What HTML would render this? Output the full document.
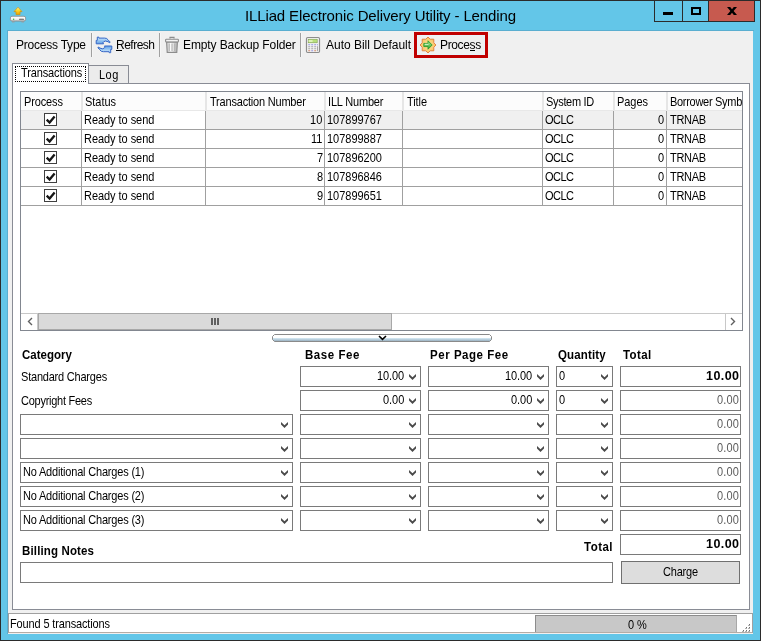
<!DOCTYPE html>
<html><head><meta charset="utf-8"><style>
html,body{margin:0;padding:0;width:761px;height:641px;overflow:hidden;background:#63c6e8}
body>div,body>svg{position:absolute}
.t{white-space:nowrap;font-family:"Liberation Sans",sans-serif;will-change:transform}
</style></head><body>
<div style="left:0;top:0;width:761px;height:641px;background:#63c6e8;box-shadow:inset 0 0 0 1px #2b2b2b"></div>
<div class="t" style="left:245.00px;top:8.00px;font-size:15px;line-height:15px;font-weight:normal;color:#000;letter-spacing:-0.135px;">ILLiad Electronic Delivery Utility - Lending</div>
<div style="left:654px;top:0px;width:101px;height:22px;background:#63c6e8;border:1px solid #2b2b2b;box-sizing:border-box"></div>
<div style="left:682px;top:0px;width:1px;height:22px;background:#2b2b2b"></div>
<div style="left:708px;top:0px;width:47px;height:22px;background:#c75a4f;border:1px solid #2b2b2b;border-top-color:#2b2b2b;box-sizing:border-box"></div>
<div style="left:663px;top:12px;width:10px;height:3px;background:#000"></div>
<div style="left:691px;top:7px;width:10px;height:8px;border:2px solid #000;box-sizing:border-box"></div>
<svg style="left:727px;top:7px" width="10" height="8" viewBox="0 0 10 8"><path d="M0 0h3.2l1.8 2.2l1.8-2.2h3.2l-3.4 4l3.4 4h-3.2l-1.8-2.2l-1.8 2.2h-3.2l3.4-4z" fill="#000"/></svg>
<svg style="left:9px;top:5px" width="18" height="19" viewBox="0 0 18 19">
<defs><linearGradient id="ga" x1="0" y1="0" x2="0" y2="1"><stop offset="0" stop-color="#fffbd0"/><stop offset="0.35" stop-color="#ffe030"/><stop offset="1" stop-color="#e8a000"/></linearGradient>
<linearGradient id="gd" x1="0" y1="0" x2="0" y2="1"><stop offset="0" stop-color="#ffffff"/><stop offset="0.6" stop-color="#f2f2f2"/><stop offset="1" stop-color="#bcbcbc"/></linearGradient></defs>
<path d="M9 2.2 L13 6.6 L11 6.6 L11 9.6 L7 9.6 L7 6.6 L5 6.6 Z" fill="url(#ga)" stroke="#d89000" stroke-width="0.7" stroke-linejoin="round"/>
<rect x="1.4" y="11.3" width="15.2" height="4.8" rx="1.6" fill="url(#gd)" stroke="#8a8a8a" stroke-width="0.8"/>
<rect x="3" y="16.3" width="2.6" height="1.1" fill="#9a9a9a"/><rect x="12.4" y="16.3" width="2.6" height="1.1" fill="#9a9a9a"/>
<circle cx="4.6" cy="14.3" r="0.75" fill="#2ec02e"/><rect x="10" y="13.8" width="5" height="1" rx="0.5" fill="#5a5a5a"/>
</svg>
<div style="left:8px;top:31px;width:745px;height:603px;background:#f0f0f0"></div>
<div style="left:7px;top:30px;width:747px;height:1px;background:#5aaed0"></div>
<div style="left:7px;top:30px;width:1px;height:604px;background:#5aaed0"></div>
<div class="t" style="left:15.50px;top:39.00px;font-size:12px;line-height:12px;font-weight:normal;color:#000;letter-spacing:-0.224px;">Process Type</div>
<div style="left:91px;top:33px;width:1px;height:24px;background:#a0a0a0"></div>
<div style="left:92px;top:33px;width:1px;height:24px;background:#f6f6f6"></div>
<div style="left:159px;top:33px;width:1px;height:24px;background:#a0a0a0"></div>
<div style="left:160px;top:33px;width:1px;height:24px;background:#f6f6f6"></div>
<div style="left:300px;top:33px;width:1px;height:24px;background:#a0a0a0"></div>
<div style="left:301px;top:33px;width:1px;height:24px;background:#f6f6f6"></div>
<svg style="left:95px;top:36px" width="18" height="18" viewBox="0 0 18 18">
<defs><linearGradient id="gr" x1="0" y1="0" x2="0" y2="1"><stop offset="0" stop-color="#d8f0ff"/><stop offset="1" stop-color="#5d9fe6"/></linearGradient></defs>
<g id="arr"><path d="M1.2 7.8 L1.2 4.4 L2.3 4.4 L2.3 1.1 L3.8 1.1 L3.8 2.1 L9.7 2.1 L11.7 2.5 L13.4 4.2 L15 5.9 L14.8 6.8 L13 5.7 L10.3 5 L8.6 5.9 L7.8 6.8 L8.6 7.8 Z" fill="url(#gr)" stroke="#3566c6" stroke-width="1"/></g>
<use href="#arr" transform="rotate(180 9 8.9)"/>
</svg>
<div class="t" style="left:116.00px;top:39.00px;font-size:12px;line-height:12px;font-weight:normal;color:#000;letter-spacing:-0.503px;">Refresh</div>
<div style="left:116px;top:50px;width:6px;height:1px;background:#000"></div>
<svg style="left:164px;top:36px" width="16" height="18" viewBox="0 0 16 18">
<defs><linearGradient id="gt" x1="0" y1="0" x2="1" y2="0"><stop offset="0" stop-color="#c8c8c8"/><stop offset="0.4" stop-color="#ffffff"/><stop offset="1" stop-color="#b0b0b0"/></linearGradient></defs>
<path d="M6 2.5 L6 1.3 L10 1.3 L10 2.5" fill="none" stroke="#8c8c8c" stroke-width="1.2"/>
<rect x="1.6" y="3.3" width="12.8" height="2.8" rx="0.8" fill="#f4f4f4" stroke="#8c8c8c" stroke-width="1.1"/>
<path d="M2.6 6.2 L13.4 6.2 L12.8 16.4 L3.2 16.4 Z" fill="url(#gt)" stroke="#8c8c8c" stroke-width="1.1"/>
<path d="M5.2 7.5V15M8 7.5V15M10.8 7.5V15" stroke="#a8a8a8" stroke-width="1"/>
</svg>
<div class="t" style="left:183.00px;top:39.00px;font-size:12px;line-height:12px;font-weight:normal;color:#000;letter-spacing:-0.105px;">Empty Backup Folder</div>
<svg style="left:305px;top:36px" width="16" height="18" viewBox="0 0 16 18">
<rect x="1.5" y="1.5" width="13" height="15" rx="1.2" fill="#f6f6f6" stroke="#8c8c8c" stroke-width="1.2"/>
<rect x="3.2" y="3.2" width="9" height="3.6" fill="#b8e07a" stroke="#7a9a50" stroke-width="0.6"/>
<rect x="3.6" y="4.4" width="4" height="1.2" fill="#f8ffe0"/>
<g fill="#9a9ae0"><rect x="3.2" y="8.2" width="2" height="1.1"/><rect x="6.2" y="8.2" width="2" height="1.1"/><rect x="9.2" y="8.2" width="2" height="1.1"/><rect x="12" y="8.2" width="1" height="1.1"/></g>
<g fill="#a8a8a8"><rect x="3.2" y="10.2" width="2" height="1.1"/><rect x="6.2" y="10.2" width="2" height="1.1"/><rect x="9.2" y="10.2" width="2" height="1.1"/><rect x="3.2" y="12.2" width="2" height="1.1"/><rect x="6.2" y="12.2" width="2" height="1.1"/><rect x="9.2" y="12.2" width="2" height="1.1"/><rect x="12" y="10.2" width="1" height="5"/></g>
<rect x="3.2" y="14.2" width="2" height="1.1" fill="#d09070"/><rect x="6.2" y="14.2" width="2" height="1.1" fill="#9a9ae0"/><rect x="9.2" y="14.2" width="2" height="1.1" fill="#d09070"/>
</svg>
<div class="t" style="left:325.60px;top:39.00px;font-size:12px;line-height:12px;font-weight:normal;color:#000;letter-spacing:-0.022px;">Auto Bill Default</div>
<div style="left:414px;top:32px;width:74px;height:26px;border:3px solid #c00000;box-sizing:border-box"></div>
<div style="left:417px;top:35px;width:68px;height:20px;border:1px solid #e6f4fb;box-sizing:border-box;background:#f0f0f0"></div>
<svg style="left:419px;top:36px" width="18" height="18" viewBox="0 0 18 18">
<defs><radialGradient id="gs" cx="0.5" cy="0.5" r="0.6"><stop offset="0" stop-color="#ffe8a0"/><stop offset="1" stop-color="#f7b850"/></radialGradient>
<linearGradient id="gg" x1="0" y1="0" x2="0" y2="1"><stop offset="0" stop-color="#b0f0a0"/><stop offset="1" stop-color="#2aa02a"/></linearGradient></defs>
<path d="M9 1 L11.2 3.2 L14.8 3.2 L14.8 6.8 L17 9 L14.8 11.2 L14.8 14.8 L11.2 14.8 L9 17 L6.8 14.8 L3.2 14.8 L3.2 11.2 L1 9 L3.2 6.8 L3.2 3.2 L6.8 3.2 Z" fill="url(#gs)" stroke="#e07b3a" stroke-width="0.9"/>
<path d="M4.8 7.4 L9 7.4 L9 4.8 L13.2 9 L9 13.2 L9 10.6 L4.8 10.6 Z" fill="url(#gg)" stroke="#2a9a2a" stroke-width="0.9" stroke-linejoin="round"/>
<path d="M5.8 8.3 L9.5 8.3" stroke="#e8ffe0" stroke-width="0.9"/>
</svg>
<div class="t" style="left:439.50px;top:39.00px;font-size:12px;line-height:12px;font-weight:normal;color:#000;letter-spacing:-0.357px;">Process</div>
<div style="left:470px;top:50px;width:5px;height:1px;background:#000"></div>
<div style="left:12px;top:83px;width:738px;height:527px;background:#fff;border:1px solid #898c95;box-sizing:border-box"></div>
<div style="left:88px;top:65px;width:41px;height:18px;background:#ececec;border:1px solid #898c95;border-bottom:none;box-sizing:border-box"></div>
<div class="t" style="left:98.70px;top:69.00px;font-size:11px;line-height:11px;font-weight:normal;color:#000;letter-spacing:0.463px;transform:scaleY(1.12);transform-origin:0 0;">Log</div>
<div style="left:12px;top:63px;width:77px;height:21px;background:#fff;border:1px solid #898c95;border-bottom:none;box-sizing:border-box"></div>
<div style="left:15px;top:66px;width:71px;height:16px;border:1px dotted #000;box-sizing:border-box"></div>
<div class="t" style="left:20.50px;top:67.00px;font-size:11px;line-height:11px;font-weight:normal;color:#000;letter-spacing:-0.118px;transform:scaleY(1.12);transform-origin:0 0;">Transactions</div>
<div style="left:20px;top:91px;width:723px;height:240px;background:#fff;border:1px solid #828790;box-sizing:border-box"></div>
<div style="left:21px;top:92px;width:721px;height:18px;background:#fcfcfc"></div>
<div style="left:21px;top:110px;width:721px;height:1px;background:#e8e8e8"></div>
<div style="left:81px;top:92px;width:2px;height:18px;background:#e6e6e6"></div>
<div style="left:205px;top:92px;width:2px;height:18px;background:#e6e6e6"></div>
<div style="left:324px;top:92px;width:2px;height:18px;background:#e6e6e6"></div>
<div style="left:402px;top:92px;width:2px;height:18px;background:#e6e6e6"></div>
<div style="left:542px;top:92px;width:2px;height:18px;background:#e6e6e6"></div>
<div style="left:613px;top:92px;width:2px;height:18px;background:#e6e6e6"></div>
<div style="left:666px;top:92px;width:2px;height:18px;background:#e6e6e6"></div>
<div class="t" style="left:23.50px;top:96.00px;font-size:11px;line-height:11px;font-weight:normal;color:#000;letter-spacing:-0.125px;transform:scaleY(1.12);transform-origin:0 0;">Process</div>
<div class="t" style="left:84.70px;top:96.00px;font-size:11px;line-height:11px;font-weight:normal;color:#000;letter-spacing:-0.044px;transform:scaleY(1.12);transform-origin:0 0;">Status</div>
<div class="t" style="left:210.10px;top:96.00px;font-size:11px;line-height:11px;font-weight:normal;color:#000;letter-spacing:-0.199px;transform:scaleY(1.12);transform-origin:0 0;">Transaction Number</div>
<div class="t" style="left:327.60px;top:96.00px;font-size:11px;line-height:11px;font-weight:normal;color:#000;letter-spacing:-0.177px;transform:scaleY(1.12);transform-origin:0 0;">ILL Number</div>
<div class="t" style="left:406.60px;top:96.00px;font-size:11px;line-height:11px;font-weight:normal;color:#000;letter-spacing:-0.094px;transform:scaleY(1.12);transform-origin:0 0;">Title</div>
<div class="t" style="left:545.70px;top:96.00px;font-size:11px;line-height:11px;font-weight:normal;color:#000;letter-spacing:-0.319px;transform:scaleY(1.12);transform-origin:0 0;">System ID</div>
<div class="t" style="left:617.20px;top:96.00px;font-size:11px;line-height:11px;font-weight:normal;color:#000;letter-spacing:-0.055px;transform:scaleY(1.12);transform-origin:0 0;">Pages</div>
<div class="t" style="left:669.70px;top:96.00px;font-size:11px;line-height:11px;font-weight:normal;color:#000;letter-spacing:-0.293px;transform:scaleY(1.12);transform-origin:0 0;">Borrower Symb</div>
<div style="left:21px;top:111px;width:721px;height:18px;background:#f0f0f0"></div>
<div style="left:82px;top:111px;width:124px;height:18px;background:#fff"></div>
<div style="left:21px;top:129px;width:721px;height:1px;background:#a0a0a0"></div>
<div style="left:81px;top:111px;width:1px;height:19px;background:#a0a0a0"></div>
<div style="left:205px;top:111px;width:1px;height:19px;background:#a0a0a0"></div>
<div style="left:324px;top:111px;width:1px;height:19px;background:#a0a0a0"></div>
<div style="left:402px;top:111px;width:1px;height:19px;background:#a0a0a0"></div>
<div style="left:542px;top:111px;width:1px;height:19px;background:#a0a0a0"></div>
<div style="left:613px;top:111px;width:1px;height:19px;background:#a0a0a0"></div>
<div style="left:666px;top:111px;width:1px;height:19px;background:#a0a0a0"></div>
<div style="left:44px;top:113px;width:13px;height:13px;background:#fff;border:1px solid #404040;box-sizing:border-box"></div>
<svg style="left:44px;top:113px" width="13" height="13" viewBox="0 0 13 13"><path d="M2.7 6.6 L5.6 9.5 L10.6 3.4" fill="none" stroke="#151515" stroke-width="2.3"/></svg>
<div class="t" style="left:83.70px;top:114.00px;font-size:11px;line-height:11px;font-weight:normal;color:#000;letter-spacing:-0.050px;transform:scaleY(1.12);transform-origin:0 0;">Ready to send</div>
<div class="t" style="left:310.45px;top:114.00px;font-size:11px;line-height:11px;font-weight:normal;color:#000;letter-spacing:0.050px;transform:scaleY(1.12);transform-origin:0 0;">10</div>
<div class="t" style="left:326.90px;top:114.00px;font-size:11px;line-height:11px;font-weight:normal;color:#000;letter-spacing:-0.016px;transform:scaleY(1.12);transform-origin:0 0;">107899767</div>
<div class="t" style="left:544.80px;top:114.00px;font-size:11px;line-height:11px;font-weight:normal;color:#000;letter-spacing:-0.521px;transform:scaleY(1.12);transform-origin:0 0;">OCLC</div>
<div class="t" style="left:657.80px;top:114.00px;font-size:11px;line-height:11px;font-weight:normal;color:#000;letter-spacing:1.075px;transform:scaleY(1.12);transform-origin:0 0;">0</div>
<div class="t" style="left:670.00px;top:114.00px;font-size:11px;line-height:11px;font-weight:normal;color:#000;letter-spacing:-0.320px;transform:scaleY(1.12);transform-origin:0 0;">TRNAB</div>
<div style="left:21px;top:130px;width:721px;height:18px;background:#fff"></div>
<div style="left:21px;top:148px;width:721px;height:1px;background:#a0a0a0"></div>
<div style="left:81px;top:130px;width:1px;height:19px;background:#a0a0a0"></div>
<div style="left:205px;top:130px;width:1px;height:19px;background:#a0a0a0"></div>
<div style="left:324px;top:130px;width:1px;height:19px;background:#a0a0a0"></div>
<div style="left:402px;top:130px;width:1px;height:19px;background:#a0a0a0"></div>
<div style="left:542px;top:130px;width:1px;height:19px;background:#a0a0a0"></div>
<div style="left:613px;top:130px;width:1px;height:19px;background:#a0a0a0"></div>
<div style="left:666px;top:130px;width:1px;height:19px;background:#a0a0a0"></div>
<div style="left:44px;top:132px;width:13px;height:13px;background:#fff;border:1px solid #404040;box-sizing:border-box"></div>
<svg style="left:44px;top:132px" width="13" height="13" viewBox="0 0 13 13"><path d="M2.7 6.6 L5.6 9.5 L10.6 3.4" fill="none" stroke="#151515" stroke-width="2.3"/></svg>
<div class="t" style="left:83.70px;top:133.00px;font-size:11px;line-height:11px;font-weight:normal;color:#000;letter-spacing:-0.050px;transform:scaleY(1.12);transform-origin:0 0;">Ready to send</div>
<div class="t" style="left:311.26px;top:133.00px;font-size:11px;line-height:11px;font-weight:normal;color:#000;letter-spacing:0.050px;transform:scaleY(1.12);transform-origin:0 0;">11</div>
<div class="t" style="left:326.90px;top:133.00px;font-size:11px;line-height:11px;font-weight:normal;color:#000;letter-spacing:-0.016px;transform:scaleY(1.12);transform-origin:0 0;">107899887</div>
<div class="t" style="left:544.80px;top:133.00px;font-size:11px;line-height:11px;font-weight:normal;color:#000;letter-spacing:-0.521px;transform:scaleY(1.12);transform-origin:0 0;">OCLC</div>
<div class="t" style="left:657.80px;top:133.00px;font-size:11px;line-height:11px;font-weight:normal;color:#000;letter-spacing:1.075px;transform:scaleY(1.12);transform-origin:0 0;">0</div>
<div class="t" style="left:670.00px;top:133.00px;font-size:11px;line-height:11px;font-weight:normal;color:#000;letter-spacing:-0.320px;transform:scaleY(1.12);transform-origin:0 0;">TRNAB</div>
<div style="left:21px;top:149px;width:721px;height:18px;background:#fff"></div>
<div style="left:21px;top:167px;width:721px;height:1px;background:#a0a0a0"></div>
<div style="left:81px;top:149px;width:1px;height:19px;background:#a0a0a0"></div>
<div style="left:205px;top:149px;width:1px;height:19px;background:#a0a0a0"></div>
<div style="left:324px;top:149px;width:1px;height:19px;background:#a0a0a0"></div>
<div style="left:402px;top:149px;width:1px;height:19px;background:#a0a0a0"></div>
<div style="left:542px;top:149px;width:1px;height:19px;background:#a0a0a0"></div>
<div style="left:613px;top:149px;width:1px;height:19px;background:#a0a0a0"></div>
<div style="left:666px;top:149px;width:1px;height:19px;background:#a0a0a0"></div>
<div style="left:44px;top:151px;width:13px;height:13px;background:#fff;border:1px solid #404040;box-sizing:border-box"></div>
<svg style="left:44px;top:151px" width="13" height="13" viewBox="0 0 13 13"><path d="M2.7 6.6 L5.6 9.5 L10.6 3.4" fill="none" stroke="#151515" stroke-width="2.3"/></svg>
<div class="t" style="left:83.70px;top:152.00px;font-size:11px;line-height:11px;font-weight:normal;color:#000;letter-spacing:-0.050px;transform:scaleY(1.12);transform-origin:0 0;">Ready to send</div>
<div class="t" style="left:316.57px;top:152.00px;font-size:11px;line-height:11px;font-weight:normal;color:#000;letter-spacing:0.050px;transform:scaleY(1.12);transform-origin:0 0;">7</div>
<div class="t" style="left:326.90px;top:152.00px;font-size:11px;line-height:11px;font-weight:normal;color:#000;letter-spacing:-0.016px;transform:scaleY(1.12);transform-origin:0 0;">107896200</div>
<div class="t" style="left:544.80px;top:152.00px;font-size:11px;line-height:11px;font-weight:normal;color:#000;letter-spacing:-0.521px;transform:scaleY(1.12);transform-origin:0 0;">OCLC</div>
<div class="t" style="left:657.80px;top:152.00px;font-size:11px;line-height:11px;font-weight:normal;color:#000;letter-spacing:1.075px;transform:scaleY(1.12);transform-origin:0 0;">0</div>
<div class="t" style="left:670.00px;top:152.00px;font-size:11px;line-height:11px;font-weight:normal;color:#000;letter-spacing:-0.320px;transform:scaleY(1.12);transform-origin:0 0;">TRNAB</div>
<div style="left:21px;top:168px;width:721px;height:18px;background:#fff"></div>
<div style="left:21px;top:186px;width:721px;height:1px;background:#a0a0a0"></div>
<div style="left:81px;top:168px;width:1px;height:19px;background:#a0a0a0"></div>
<div style="left:205px;top:168px;width:1px;height:19px;background:#a0a0a0"></div>
<div style="left:324px;top:168px;width:1px;height:19px;background:#a0a0a0"></div>
<div style="left:402px;top:168px;width:1px;height:19px;background:#a0a0a0"></div>
<div style="left:542px;top:168px;width:1px;height:19px;background:#a0a0a0"></div>
<div style="left:613px;top:168px;width:1px;height:19px;background:#a0a0a0"></div>
<div style="left:666px;top:168px;width:1px;height:19px;background:#a0a0a0"></div>
<div style="left:44px;top:170px;width:13px;height:13px;background:#fff;border:1px solid #404040;box-sizing:border-box"></div>
<svg style="left:44px;top:170px" width="13" height="13" viewBox="0 0 13 13"><path d="M2.7 6.6 L5.6 9.5 L10.6 3.4" fill="none" stroke="#151515" stroke-width="2.3"/></svg>
<div class="t" style="left:83.70px;top:171.00px;font-size:11px;line-height:11px;font-weight:normal;color:#000;letter-spacing:-0.050px;transform:scaleY(1.12);transform-origin:0 0;">Ready to send</div>
<div class="t" style="left:316.57px;top:171.00px;font-size:11px;line-height:11px;font-weight:normal;color:#000;letter-spacing:0.050px;transform:scaleY(1.12);transform-origin:0 0;">8</div>
<div class="t" style="left:326.90px;top:171.00px;font-size:11px;line-height:11px;font-weight:normal;color:#000;letter-spacing:-0.016px;transform:scaleY(1.12);transform-origin:0 0;">107896846</div>
<div class="t" style="left:544.80px;top:171.00px;font-size:11px;line-height:11px;font-weight:normal;color:#000;letter-spacing:-0.521px;transform:scaleY(1.12);transform-origin:0 0;">OCLC</div>
<div class="t" style="left:657.80px;top:171.00px;font-size:11px;line-height:11px;font-weight:normal;color:#000;letter-spacing:1.075px;transform:scaleY(1.12);transform-origin:0 0;">0</div>
<div class="t" style="left:670.00px;top:171.00px;font-size:11px;line-height:11px;font-weight:normal;color:#000;letter-spacing:-0.320px;transform:scaleY(1.12);transform-origin:0 0;">TRNAB</div>
<div style="left:21px;top:187px;width:721px;height:18px;background:#fff"></div>
<div style="left:21px;top:205px;width:721px;height:1px;background:#a0a0a0"></div>
<div style="left:81px;top:187px;width:1px;height:19px;background:#a0a0a0"></div>
<div style="left:205px;top:187px;width:1px;height:19px;background:#a0a0a0"></div>
<div style="left:324px;top:187px;width:1px;height:19px;background:#a0a0a0"></div>
<div style="left:402px;top:187px;width:1px;height:19px;background:#a0a0a0"></div>
<div style="left:542px;top:187px;width:1px;height:19px;background:#a0a0a0"></div>
<div style="left:613px;top:187px;width:1px;height:19px;background:#a0a0a0"></div>
<div style="left:666px;top:187px;width:1px;height:19px;background:#a0a0a0"></div>
<div style="left:44px;top:189px;width:13px;height:13px;background:#fff;border:1px solid #404040;box-sizing:border-box"></div>
<svg style="left:44px;top:189px" width="13" height="13" viewBox="0 0 13 13"><path d="M2.7 6.6 L5.6 9.5 L10.6 3.4" fill="none" stroke="#151515" stroke-width="2.3"/></svg>
<div class="t" style="left:83.70px;top:190.00px;font-size:11px;line-height:11px;font-weight:normal;color:#000;letter-spacing:-0.050px;transform:scaleY(1.12);transform-origin:0 0;">Ready to send</div>
<div class="t" style="left:316.57px;top:190.00px;font-size:11px;line-height:11px;font-weight:normal;color:#000;letter-spacing:0.050px;transform:scaleY(1.12);transform-origin:0 0;">9</div>
<div class="t" style="left:326.90px;top:190.00px;font-size:11px;line-height:11px;font-weight:normal;color:#000;letter-spacing:-0.016px;transform:scaleY(1.12);transform-origin:0 0;">107899651</div>
<div class="t" style="left:544.80px;top:190.00px;font-size:11px;line-height:11px;font-weight:normal;color:#000;letter-spacing:-0.521px;transform:scaleY(1.12);transform-origin:0 0;">OCLC</div>
<div class="t" style="left:657.80px;top:190.00px;font-size:11px;line-height:11px;font-weight:normal;color:#000;letter-spacing:1.075px;transform:scaleY(1.12);transform-origin:0 0;">0</div>
<div class="t" style="left:670.00px;top:190.00px;font-size:11px;line-height:11px;font-weight:normal;color:#000;letter-spacing:-0.320px;transform:scaleY(1.12);transform-origin:0 0;">TRNAB</div>
<div style="left:21px;top:313px;width:721px;height:17px;background:#fff"></div>
<div style="left:21px;top:313px;width:721px;height:1px;background:#c8c8c8"></div>
<div style="left:38px;top:313px;width:354px;height:17px;background:#dadada;border:1px solid #a8a8a8;box-sizing:border-box"></div>
<div style="left:725px;top:313px;width:1px;height:17px;background:#c8c8c8"></div>
<div style="left:37px;top:313px;width:1px;height:17px;background:#c8c8c8"></div>
<div style="left:211px;top:318px;width:2px;height:7px;background:#606060"></div>
<div style="left:214px;top:318px;width:2px;height:7px;background:#606060"></div>
<div style="left:217px;top:318px;width:2px;height:7px;background:#606060"></div>
<svg style="left:26px;top:317px" width="8" height="9" viewBox="0 0 8 9"><path d="M6 1 L2.5 4.5 L6 8" fill="none" stroke="#606060" stroke-width="1.4"/></svg>
<svg style="left:729px;top:317px" width="8" height="9" viewBox="0 0 8 9"><path d="M2 1 L5.5 4.5 L2 8" fill="none" stroke="#606060" stroke-width="1.4"/></svg>
<svg style="left:272px;top:334px" width="220" height="8" viewBox="0 0 220 8">
<defs><linearGradient id="gsp" x1="0" y1="0" x2="0" y2="1"><stop offset="0" stop-color="#fff"/><stop offset="0.45" stop-color="#fff"/><stop offset="0.5" stop-color="#d8ecf8"/><stop offset="1" stop-color="#90a8b8"/></linearGradient></defs>
<path d="M2.5 0.5 L217.5 0.5 L219.5 2.5 L219.5 5.5 L217.5 7.5 L2.5 7.5 L0.5 5.5 L0.5 2.5 Z" fill="url(#gsp)" stroke="#8a8a8a" stroke-width="1"/>
<path d="M107 2 L110.5 5.3 L114 2" fill="none" stroke="#000" stroke-width="1.6"/>
</svg>
<div class="t" style="left:21.90px;top:349.00px;font-size:11.5px;line-height:11.5px;font-weight:bold;color:#000;letter-spacing:-0.006px;transform:scaleY(1.1);transform-origin:0 0;">Category</div>
<div class="t" style="left:305.40px;top:349.00px;font-size:11.5px;line-height:11.5px;font-weight:bold;color:#000;letter-spacing:0.545px;transform:scaleY(1.1);transform-origin:0 0;">Base Fee</div>
<div class="t" style="left:429.60px;top:349.00px;font-size:11.5px;line-height:11.5px;font-weight:bold;color:#000;letter-spacing:0.536px;transform:scaleY(1.1);transform-origin:0 0;">Per Page Fee</div>
<div class="t" style="left:557.70px;top:349.00px;font-size:11.5px;line-height:11.5px;font-weight:bold;color:#000;letter-spacing:0.154px;transform:scaleY(1.1);transform-origin:0 0;">Quantity</div>
<div class="t" style="left:623.30px;top:349.00px;font-size:11.5px;line-height:11.5px;font-weight:bold;color:#000;letter-spacing:0.398px;transform:scaleY(1.1);transform-origin:0 0;">Total</div>
<div class="t" style="left:21.40px;top:371.00px;font-size:11px;line-height:11px;font-weight:normal;color:#000;letter-spacing:-0.210px;transform:scaleY(1.12);transform-origin:0 0;">Standard Charges</div>
<div class="t" style="left:21.40px;top:395.00px;font-size:11px;line-height:11px;font-weight:normal;color:#000;letter-spacing:-0.263px;transform:scaleY(1.12);transform-origin:0 0;">Copyright Fees</div>
<div style="left:300px;top:366px;width:121px;height:21px;background:#fff;border:1px solid #7a7a7a;box-sizing:border-box"></div>
<svg style="left:409px;top:374px" width="7" height="6" viewBox="0 0 7 6"><path d="M0 0 L3.5 3.3 L7 0 L7 2.5 L3.5 6 L0 2.5 Z" fill="#4a4a4a"/></svg>
<div class="t" style="left:376.82px;top:370.00px;font-size:11px;line-height:11px;font-weight:normal;color:#000;letter-spacing:-0.114px;transform:scaleY(1.12);transform-origin:0 0;">10.00</div>
<div style="left:428px;top:366px;width:121px;height:21px;background:#fff;border:1px solid #7a7a7a;box-sizing:border-box"></div>
<svg style="left:537px;top:374px" width="7" height="6" viewBox="0 0 7 6"><path d="M0 0 L3.5 3.3 L7 0 L7 2.5 L3.5 6 L0 2.5 Z" fill="#4a4a4a"/></svg>
<div class="t" style="left:504.82px;top:370.00px;font-size:11px;line-height:11px;font-weight:normal;color:#000;letter-spacing:-0.114px;transform:scaleY(1.12);transform-origin:0 0;">10.00</div>
<div style="left:556px;top:366px;width:57px;height:21px;background:#fff;border:1px solid #7a7a7a;box-sizing:border-box"></div>
<svg style="left:601px;top:374px" width="7" height="6" viewBox="0 0 7 6"><path d="M0 0 L3.5 3.3 L7 0 L7 2.5 L3.5 6 L0 2.5 Z" fill="#4a4a4a"/></svg>
<div class="t" style="left:558.90px;top:370.00px;font-size:11px;line-height:11px;font-weight:normal;color:#000;letter-spacing:0.694px;transform:scaleY(1.12);transform-origin:0 0;">0</div>
<div style="left:620px;top:366px;width:121px;height:21px;background:#fff;border:1px solid #7a7a7a;box-sizing:border-box"></div>
<div class="t" style="left:706.00px;top:370.00px;font-size:12.5px;line-height:12.5px;font-weight:bold;color:#000;letter-spacing:0.430px;">10.00</div>
<div style="left:300px;top:390px;width:121px;height:21px;background:#fff;border:1px solid #7a7a7a;box-sizing:border-box"></div>
<svg style="left:409px;top:398px" width="7" height="6" viewBox="0 0 7 6"><path d="M0 0 L3.5 3.3 L7 0 L7 2.5 L3.5 6 L0 2.5 Z" fill="#4a4a4a"/></svg>
<div class="t" style="left:382.63px;top:394.00px;font-size:11px;line-height:11px;font-weight:normal;color:#000;letter-spacing:-0.050px;transform:scaleY(1.12);transform-origin:0 0;">0.00</div>
<div style="left:428px;top:390px;width:121px;height:21px;background:#fff;border:1px solid #7a7a7a;box-sizing:border-box"></div>
<svg style="left:537px;top:398px" width="7" height="6" viewBox="0 0 7 6"><path d="M0 0 L3.5 3.3 L7 0 L7 2.5 L3.5 6 L0 2.5 Z" fill="#4a4a4a"/></svg>
<div class="t" style="left:510.63px;top:394.00px;font-size:11px;line-height:11px;font-weight:normal;color:#000;letter-spacing:-0.050px;transform:scaleY(1.12);transform-origin:0 0;">0.00</div>
<div style="left:556px;top:390px;width:57px;height:21px;background:#fff;border:1px solid #7a7a7a;box-sizing:border-box"></div>
<svg style="left:601px;top:398px" width="7" height="6" viewBox="0 0 7 6"><path d="M0 0 L3.5 3.3 L7 0 L7 2.5 L3.5 6 L0 2.5 Z" fill="#4a4a4a"/></svg>
<div class="t" style="left:558.90px;top:394.00px;font-size:11px;line-height:11px;font-weight:normal;color:#000;letter-spacing:0.694px;transform:scaleY(1.12);transform-origin:0 0;">0</div>
<div style="left:620px;top:390px;width:121px;height:21px;background:#fff;border:1px solid #7a7a7a;box-sizing:border-box"></div>
<div class="t" style="left:717.00px;top:394.00px;font-size:11px;line-height:11px;font-weight:normal;color:#5c5c5c;letter-spacing:0.188px;transform:scaleY(1.12);transform-origin:0 0;">0.00</div>
<div style="left:20px;top:414px;width:273px;height:21px;background:#fff;border:1px solid #7a7a7a;box-sizing:border-box"></div>
<svg style="left:281px;top:422px" width="7" height="6" viewBox="0 0 7 6"><path d="M0 0 L3.5 3.3 L7 0 L7 2.5 L3.5 6 L0 2.5 Z" fill="#4a4a4a"/></svg>
<div style="left:300px;top:414px;width:121px;height:21px;background:#fff;border:1px solid #7a7a7a;box-sizing:border-box"></div>
<svg style="left:409px;top:422px" width="7" height="6" viewBox="0 0 7 6"><path d="M0 0 L3.5 3.3 L7 0 L7 2.5 L3.5 6 L0 2.5 Z" fill="#4a4a4a"/></svg>
<div style="left:428px;top:414px;width:121px;height:21px;background:#fff;border:1px solid #7a7a7a;box-sizing:border-box"></div>
<svg style="left:537px;top:422px" width="7" height="6" viewBox="0 0 7 6"><path d="M0 0 L3.5 3.3 L7 0 L7 2.5 L3.5 6 L0 2.5 Z" fill="#4a4a4a"/></svg>
<div style="left:556px;top:414px;width:57px;height:21px;background:#fff;border:1px solid #7a7a7a;box-sizing:border-box"></div>
<svg style="left:601px;top:422px" width="7" height="6" viewBox="0 0 7 6"><path d="M0 0 L3.5 3.3 L7 0 L7 2.5 L3.5 6 L0 2.5 Z" fill="#4a4a4a"/></svg>
<div style="left:620px;top:414px;width:121px;height:21px;background:#fff;border:1px solid #7a7a7a;box-sizing:border-box"></div>
<div class="t" style="left:717.00px;top:418.00px;font-size:11px;line-height:11px;font-weight:normal;color:#5c5c5c;letter-spacing:0.188px;transform:scaleY(1.12);transform-origin:0 0;">0.00</div>
<div style="left:20px;top:438px;width:273px;height:21px;background:#fff;border:1px solid #7a7a7a;box-sizing:border-box"></div>
<svg style="left:281px;top:446px" width="7" height="6" viewBox="0 0 7 6"><path d="M0 0 L3.5 3.3 L7 0 L7 2.5 L3.5 6 L0 2.5 Z" fill="#4a4a4a"/></svg>
<div style="left:300px;top:438px;width:121px;height:21px;background:#fff;border:1px solid #7a7a7a;box-sizing:border-box"></div>
<svg style="left:409px;top:446px" width="7" height="6" viewBox="0 0 7 6"><path d="M0 0 L3.5 3.3 L7 0 L7 2.5 L3.5 6 L0 2.5 Z" fill="#4a4a4a"/></svg>
<div style="left:428px;top:438px;width:121px;height:21px;background:#fff;border:1px solid #7a7a7a;box-sizing:border-box"></div>
<svg style="left:537px;top:446px" width="7" height="6" viewBox="0 0 7 6"><path d="M0 0 L3.5 3.3 L7 0 L7 2.5 L3.5 6 L0 2.5 Z" fill="#4a4a4a"/></svg>
<div style="left:556px;top:438px;width:57px;height:21px;background:#fff;border:1px solid #7a7a7a;box-sizing:border-box"></div>
<svg style="left:601px;top:446px" width="7" height="6" viewBox="0 0 7 6"><path d="M0 0 L3.5 3.3 L7 0 L7 2.5 L3.5 6 L0 2.5 Z" fill="#4a4a4a"/></svg>
<div style="left:620px;top:438px;width:121px;height:21px;background:#fff;border:1px solid #7a7a7a;box-sizing:border-box"></div>
<div class="t" style="left:717.00px;top:442.00px;font-size:11px;line-height:11px;font-weight:normal;color:#5c5c5c;letter-spacing:0.188px;transform:scaleY(1.12);transform-origin:0 0;">0.00</div>
<div style="left:20px;top:462px;width:273px;height:21px;background:#fff;border:1px solid #7a7a7a;box-sizing:border-box"></div>
<svg style="left:281px;top:470px" width="7" height="6" viewBox="0 0 7 6"><path d="M0 0 L3.5 3.3 L7 0 L7 2.5 L3.5 6 L0 2.5 Z" fill="#4a4a4a"/></svg>
<div class="t" style="left:22.90px;top:466.00px;font-size:11px;line-height:11px;font-weight:normal;color:#000;letter-spacing:-0.188px;transform:scaleY(1.12);transform-origin:0 0;">No Additional Charges (1)</div>
<div style="left:300px;top:462px;width:121px;height:21px;background:#fff;border:1px solid #7a7a7a;box-sizing:border-box"></div>
<svg style="left:409px;top:470px" width="7" height="6" viewBox="0 0 7 6"><path d="M0 0 L3.5 3.3 L7 0 L7 2.5 L3.5 6 L0 2.5 Z" fill="#4a4a4a"/></svg>
<div style="left:428px;top:462px;width:121px;height:21px;background:#fff;border:1px solid #7a7a7a;box-sizing:border-box"></div>
<svg style="left:537px;top:470px" width="7" height="6" viewBox="0 0 7 6"><path d="M0 0 L3.5 3.3 L7 0 L7 2.5 L3.5 6 L0 2.5 Z" fill="#4a4a4a"/></svg>
<div style="left:556px;top:462px;width:57px;height:21px;background:#fff;border:1px solid #7a7a7a;box-sizing:border-box"></div>
<svg style="left:601px;top:470px" width="7" height="6" viewBox="0 0 7 6"><path d="M0 0 L3.5 3.3 L7 0 L7 2.5 L3.5 6 L0 2.5 Z" fill="#4a4a4a"/></svg>
<div style="left:620px;top:462px;width:121px;height:21px;background:#fff;border:1px solid #7a7a7a;box-sizing:border-box"></div>
<div class="t" style="left:717.00px;top:466.00px;font-size:11px;line-height:11px;font-weight:normal;color:#5c5c5c;letter-spacing:0.188px;transform:scaleY(1.12);transform-origin:0 0;">0.00</div>
<div style="left:20px;top:486px;width:273px;height:21px;background:#fff;border:1px solid #7a7a7a;box-sizing:border-box"></div>
<svg style="left:281px;top:494px" width="7" height="6" viewBox="0 0 7 6"><path d="M0 0 L3.5 3.3 L7 0 L7 2.5 L3.5 6 L0 2.5 Z" fill="#4a4a4a"/></svg>
<div class="t" style="left:22.90px;top:490.00px;font-size:11px;line-height:11px;font-weight:normal;color:#000;letter-spacing:-0.188px;transform:scaleY(1.12);transform-origin:0 0;">No Additional Charges (2)</div>
<div style="left:300px;top:486px;width:121px;height:21px;background:#fff;border:1px solid #7a7a7a;box-sizing:border-box"></div>
<svg style="left:409px;top:494px" width="7" height="6" viewBox="0 0 7 6"><path d="M0 0 L3.5 3.3 L7 0 L7 2.5 L3.5 6 L0 2.5 Z" fill="#4a4a4a"/></svg>
<div style="left:428px;top:486px;width:121px;height:21px;background:#fff;border:1px solid #7a7a7a;box-sizing:border-box"></div>
<svg style="left:537px;top:494px" width="7" height="6" viewBox="0 0 7 6"><path d="M0 0 L3.5 3.3 L7 0 L7 2.5 L3.5 6 L0 2.5 Z" fill="#4a4a4a"/></svg>
<div style="left:556px;top:486px;width:57px;height:21px;background:#fff;border:1px solid #7a7a7a;box-sizing:border-box"></div>
<svg style="left:601px;top:494px" width="7" height="6" viewBox="0 0 7 6"><path d="M0 0 L3.5 3.3 L7 0 L7 2.5 L3.5 6 L0 2.5 Z" fill="#4a4a4a"/></svg>
<div style="left:620px;top:486px;width:121px;height:21px;background:#fff;border:1px solid #7a7a7a;box-sizing:border-box"></div>
<div class="t" style="left:717.00px;top:490.00px;font-size:11px;line-height:11px;font-weight:normal;color:#5c5c5c;letter-spacing:0.188px;transform:scaleY(1.12);transform-origin:0 0;">0.00</div>
<div style="left:20px;top:510px;width:273px;height:21px;background:#fff;border:1px solid #7a7a7a;box-sizing:border-box"></div>
<svg style="left:281px;top:518px" width="7" height="6" viewBox="0 0 7 6"><path d="M0 0 L3.5 3.3 L7 0 L7 2.5 L3.5 6 L0 2.5 Z" fill="#4a4a4a"/></svg>
<div class="t" style="left:22.90px;top:514.00px;font-size:11px;line-height:11px;font-weight:normal;color:#000;letter-spacing:-0.188px;transform:scaleY(1.12);transform-origin:0 0;">No Additional Charges (3)</div>
<div style="left:300px;top:510px;width:121px;height:21px;background:#fff;border:1px solid #7a7a7a;box-sizing:border-box"></div>
<svg style="left:409px;top:518px" width="7" height="6" viewBox="0 0 7 6"><path d="M0 0 L3.5 3.3 L7 0 L7 2.5 L3.5 6 L0 2.5 Z" fill="#4a4a4a"/></svg>
<div style="left:428px;top:510px;width:121px;height:21px;background:#fff;border:1px solid #7a7a7a;box-sizing:border-box"></div>
<svg style="left:537px;top:518px" width="7" height="6" viewBox="0 0 7 6"><path d="M0 0 L3.5 3.3 L7 0 L7 2.5 L3.5 6 L0 2.5 Z" fill="#4a4a4a"/></svg>
<div style="left:556px;top:510px;width:57px;height:21px;background:#fff;border:1px solid #7a7a7a;box-sizing:border-box"></div>
<svg style="left:601px;top:518px" width="7" height="6" viewBox="0 0 7 6"><path d="M0 0 L3.5 3.3 L7 0 L7 2.5 L3.5 6 L0 2.5 Z" fill="#4a4a4a"/></svg>
<div style="left:620px;top:510px;width:121px;height:21px;background:#fff;border:1px solid #7a7a7a;box-sizing:border-box"></div>
<div class="t" style="left:717.00px;top:514.00px;font-size:11px;line-height:11px;font-weight:normal;color:#5c5c5c;letter-spacing:0.188px;transform:scaleY(1.12);transform-origin:0 0;">0.00</div>
<div class="t" style="left:22.00px;top:545.00px;font-size:11.5px;line-height:11.5px;font-weight:bold;color:#000;letter-spacing:0.145px;transform:scaleY(1.1);transform-origin:0 0;">Billing Notes</div>
<div class="t" style="left:583.80px;top:541.00px;font-size:11.5px;line-height:11.5px;font-weight:bold;color:#000;letter-spacing:0.473px;transform:scaleY(1.1);transform-origin:0 0;">Total</div>
<div style="left:620px;top:534px;width:121px;height:21px;background:#fff;border:1px solid #7a7a7a;box-sizing:border-box"></div>
<div class="t" style="left:706.00px;top:538.00px;font-size:12.5px;line-height:12.5px;font-weight:bold;color:#000;letter-spacing:0.430px;">10.00</div>
<div style="left:20px;top:562px;width:593px;height:21px;background:#fff;border:1px solid #7a7a7a;box-sizing:border-box"></div>
<div style="left:621px;top:561px;width:119px;height:23px;background:#dddddd;border:1px solid #707070;box-sizing:border-box"></div>
<div class="t" style="left:662.60px;top:566.00px;font-size:11px;line-height:11px;font-weight:normal;color:#000;letter-spacing:-0.199px;transform:scaleY(1.12);transform-origin:0 0;">Charge</div>
<div style="left:8px;top:613px;width:745px;height:20px;background:#fff;border:1px solid #a0a0a0;border-bottom-color:#b4aca6;box-sizing:border-box"></div>
<div class="t" style="left:9.50px;top:618.00px;font-size:11px;line-height:11px;font-weight:normal;color:#000;letter-spacing:-0.143px;transform:scaleY(1.12);transform-origin:0 0;">Found 5 transactions</div>
<div style="left:535px;top:615px;width:202px;height:17px;background:#c8c8c8;border-left:1px solid #8c8c8c;border-top:1px solid #8c8c8c;border-right:1px solid #a8a8a8;box-sizing:border-box"></div>
<div class="t" style="left:627.90px;top:619.00px;font-size:11px;line-height:11px;font-weight:normal;color:#000;letter-spacing:0.075px;transform:scaleY(1.12);transform-origin:0 0;">0</div>
<div class="t" style="left:637.00px;top:619.00px;font-size:11px;line-height:11px;font-weight:normal;color:#000;letter-spacing:-1.581px;transform:scaleY(1.12);transform-origin:0 0;">%</div>
<div style="left:749px;top:624px;width:1px;height:1px;background:#707070"></div>
<div style="left:748px;top:625px;width:2px;height:1px;background:#b0b0b0"></div>
<div style="left:746px;top:627px;width:1px;height:1px;background:#707070"></div>
<div style="left:745px;top:628px;width:2px;height:1px;background:#b0b0b0"></div>
<div style="left:749px;top:627px;width:1px;height:1px;background:#707070"></div>
<div style="left:748px;top:628px;width:2px;height:1px;background:#b0b0b0"></div>
<div style="left:743px;top:630px;width:1px;height:1px;background:#707070"></div>
<div style="left:742px;top:631px;width:2px;height:1px;background:#b0b0b0"></div>
<div style="left:746px;top:630px;width:1px;height:1px;background:#707070"></div>
<div style="left:745px;top:631px;width:2px;height:1px;background:#b0b0b0"></div>
<div style="left:749px;top:630px;width:1px;height:1px;background:#707070"></div>
<div style="left:748px;top:631px;width:2px;height:1px;background:#b0b0b0"></div>
</body></html>
